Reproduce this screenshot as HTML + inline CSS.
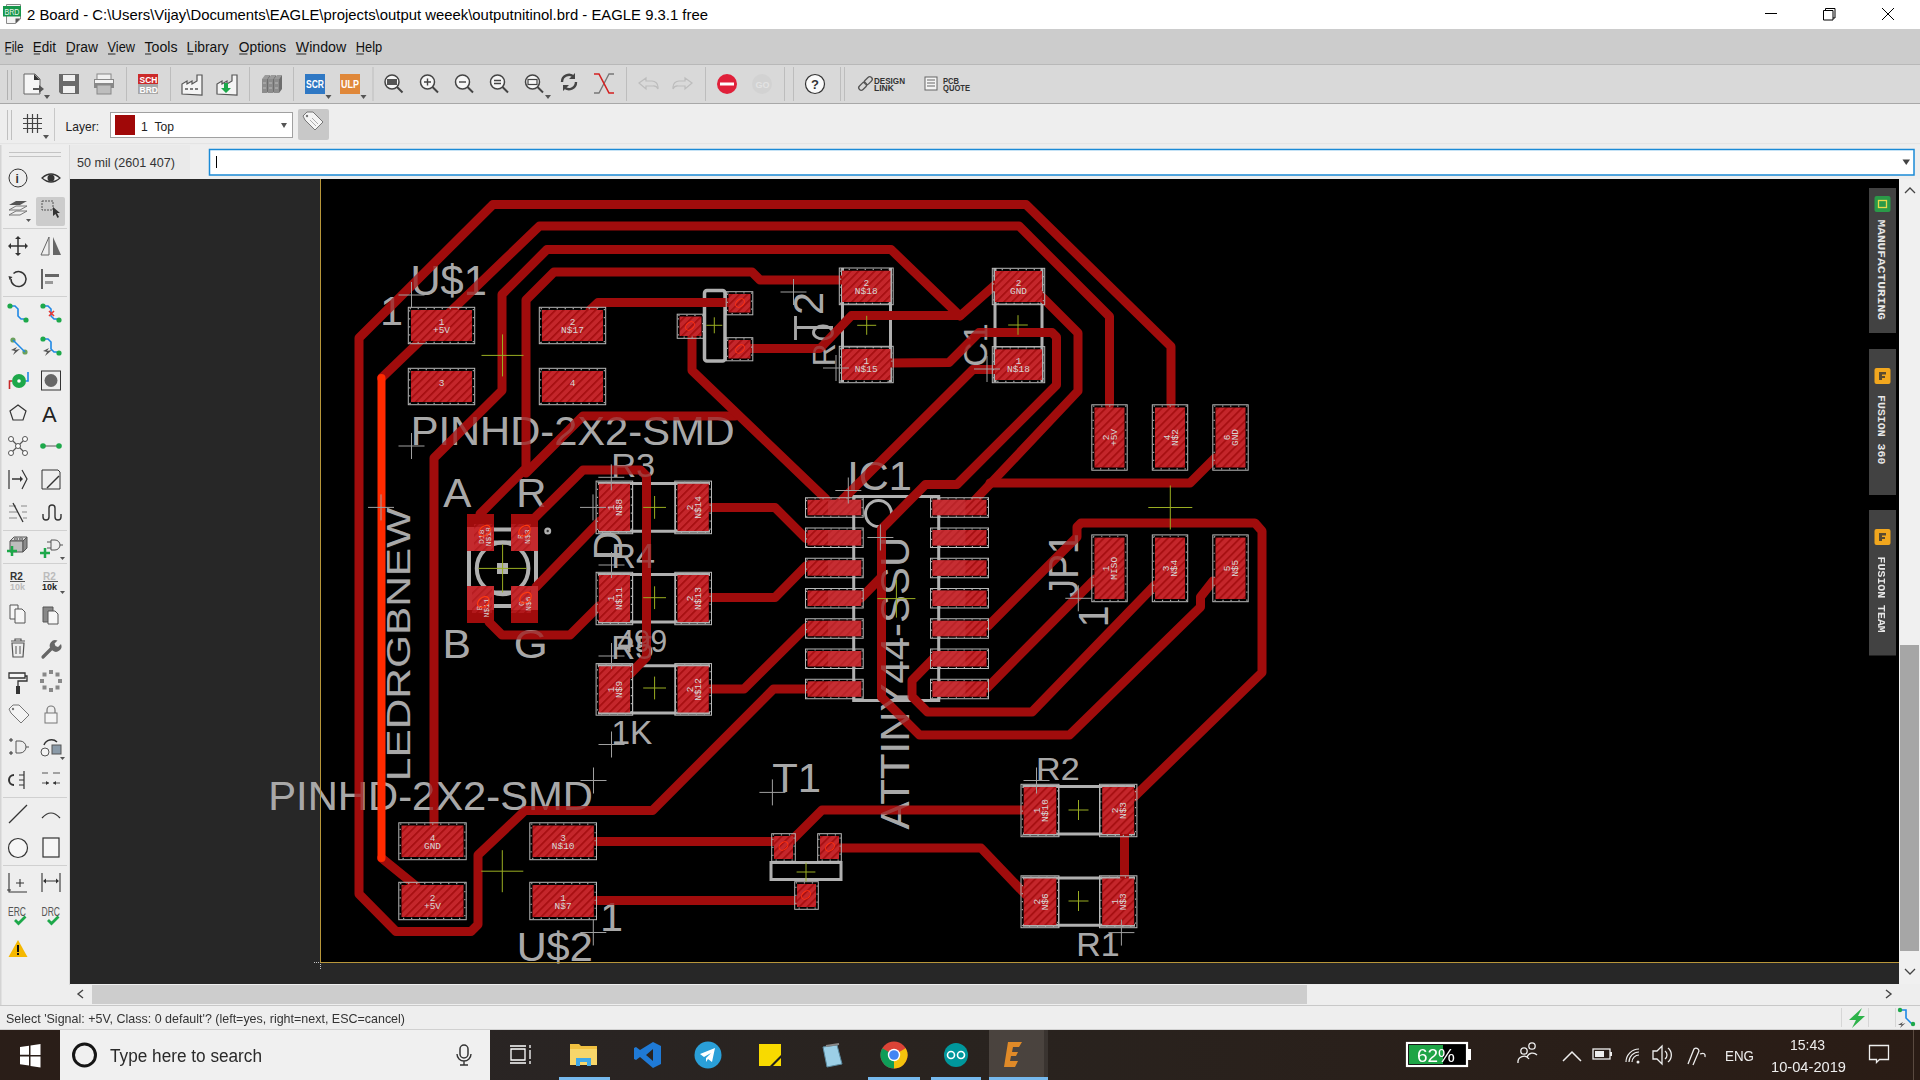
<!DOCTYPE html>
<html><head><meta charset="utf-8"><style>
*{margin:0;padding:0;box-sizing:border-box}
html,body{width:1920px;height:1080px;overflow:hidden;background:#fff}
svg text{font-family:"Liberation Sans", sans-serif}
</style></head><body>
<svg width="1920" height="1080" style="position:absolute;left:0;top:0;display:block"><rect x="0" y="0" width="1920" height="29" fill="#FFFFFF"/><path d="M6.5,4.5h14v14.5l-5,4.5h-9z" fill="#F4F4F4" stroke="#8A8A8A" stroke-width="1"/><path d="M15.5,23.5l5,-5h-5z" fill="#555"/><rect x="3" y="6" width="18" height="10.5" fill="#16964A"/><text x="4.5" y="14.5" font-size="9" fill="#E8F4EC" textLength="15" lengthAdjust="spacingAndGlyphs">BRD</text><text x="27" y="20" font-size="15" fill="#000" textLength="681" lengthAdjust="spacingAndGlyphs">2 Board - C:\Users\Vijay\Documents\EAGLE\projects\output weeek\outputnitinol.brd - EAGLE 9.3.1 free</text><path d="M1765,13.5h12" stroke="#000" stroke-width="1"/><path d="M1823.5,10.5h9.5v9.5h-9.5z M1825.5,10.5v-2h9.5v9.5h-2" stroke="#000" stroke-width="1" fill="none"/><path d="M1882,8l12,12M1894,8l-12,12" stroke="#000" stroke-width="1"/><rect x="0" y="29" width="1920" height="35" fill="#CCCCCC"/><rect x="0" y="64" width="1920" height="1" fill="#B8B8B8"/><text x="4.5" y="52" font-size="14" fill="#111" textLength="19" lengthAdjust="spacingAndGlyphs">File</text><text x="32.75" y="52" font-size="14" fill="#111" textLength="23.25" lengthAdjust="spacingAndGlyphs">Edit</text><text x="65.75" y="52" font-size="14" fill="#111" textLength="32.25" lengthAdjust="spacingAndGlyphs">Draw</text><text x="107.5" y="52" font-size="14" fill="#111" textLength="27.5" lengthAdjust="spacingAndGlyphs">View</text><text x="144.5" y="52" font-size="14" fill="#111" textLength="33" lengthAdjust="spacingAndGlyphs">Tools</text><text x="186.5" y="52" font-size="14" fill="#111" textLength="42.25" lengthAdjust="spacingAndGlyphs">Library</text><text x="238.75" y="52" font-size="14" fill="#111" textLength="47.5" lengthAdjust="spacingAndGlyphs">Options</text><text x="295.75" y="52" font-size="14" fill="#111" textLength="50.5" lengthAdjust="spacingAndGlyphs">Window</text><text x="355.75" y="52" font-size="14" fill="#111" textLength="26.5" lengthAdjust="spacingAndGlyphs">Help</text><rect x="5.5" y="53.5" width="5.75" height="1" fill="#222"/><rect x="33.75" y="53.5" width="6.25" height="1" fill="#222"/><rect x="66.25" y="53.5" width="7.5" height="1" fill="#222"/><rect x="108" y="53.5" width="7.5" height="1" fill="#222"/><rect x="145" y="53.5" width="6.25" height="1" fill="#222"/><rect x="187.5" y="53.5" width="5.5" height="1" fill="#222"/><rect x="239.25" y="53.5" width="8.25" height="1" fill="#222"/><rect x="296.25" y="53.5" width="10.0" height="1" fill="#222"/><rect x="356.25" y="53.5" width="7.5" height="1" fill="#222"/><rect x="0" y="65" width="1920" height="38" fill="#D9D9D9"/><rect x="0" y="103" width="1920" height="1" fill="#A8A8A8"/><path d="M7.5,70V100M11.5,70V100" stroke="#B0B0B0" stroke-width="1"/><path d="M126.5,67V101" stroke="#BDBDBD" stroke-width="1"/><path d="M170.5,67V101" stroke="#BDBDBD" stroke-width="1"/><path d="M249.5,67V101" stroke="#BDBDBD" stroke-width="1"/><path d="M293.5,67V101" stroke="#BDBDBD" stroke-width="1"/><path d="M373,67V101" stroke="#BDBDBD" stroke-width="1"/><path d="M626.5,67V101" stroke="#BDBDBD" stroke-width="1"/><path d="M705.5,67V101" stroke="#BDBDBD" stroke-width="1"/><path d="M784.5,67V101" stroke="#BDBDBD" stroke-width="1"/><path d="M793.5,67V101" stroke="#BDBDBD" stroke-width="1"/><path d="M840.5,67V101" stroke="#BDBDBD" stroke-width="1"/><path d="M844.5,67V101" stroke="#BDBDBD" stroke-width="1"/><path d="M24,74h11l5,5v15H24z" fill="#F6F6F6" stroke="#666" stroke-width="1"/><path d="M34,74l6,6h-6z" fill="#333"/><path d="M33,88h6v-3l5,4l-5,4v-3h-6z" fill="#555"/><path d="M44,95h6l-3,4z" fill="#555"/><path d="M59,74h20v20H61l-2,-2z" fill="#6A6A6A"/><rect x="63" y="75" width="12" height="6" fill="#F0F0F0"/><rect x="63" y="86" width="12" height="7" fill="#F0F0F0"/><rect x="97" y="74" width="14" height="7" fill="#F0F0F0" stroke="#888" stroke-width="1"/><rect x="94" y="79" width="20" height="9" fill="#888"/><rect x="95" y="80" width="18" height="3" fill="#F4F4F4"/><rect x="97" y="85" width="14" height="9" fill="#BDBDBD" stroke="#888" stroke-width="1"/><rect x="138" y="74" width="20" height="10" fill="#CC2A2A"/><rect x="138" y="84" width="20" height="10" fill="#A8A8A8"/><text x="139.5" y="82.5" font-size="8.5" font-weight="bold" fill="#fff">SCH</text><text x="139.5" y="92.5" font-size="8.5" font-weight="bold" fill="#fff">BRD</text><path d="M182,94V84l5,-3v3l5,-3v3l5,-3v-6h5v20z" fill="#F4F4F4" stroke="#555" stroke-width="1.2"/><path d="M185,89h3M190,89h3M195,89h3" stroke="#555" stroke-width="1.5"/><path d="M217,94V84l5,-3v3l5,-3v3l5,-3v-6h5v20z" fill="#F4F4F4" stroke="#555" stroke-width="1.2"/><path d="M224,83h4v5h3l-5,5l-5,-5h3z" fill="#1DA84A"/><path d="M262,79l3,-4h5l-3,4z" fill="#9A9A9A"/><rect x="262" y="79" width="5" height="14" fill="#8C8C8C"/><path d="M267,79l3,-4v14l-3,4z" fill="#6E6E6E"/><path d="M263,83h3M263,88h3" stroke="#C8C8C8" stroke-width="0.8"/><path d="M268,79l3,-4h5l-3,4z" fill="#9A9A9A"/><rect x="268" y="79" width="5" height="14" fill="#8C8C8C"/><path d="M273,79l3,-4v14l-3,4z" fill="#6E6E6E"/><path d="M269,83h3M269,88h3" stroke="#C8C8C8" stroke-width="0.8"/><path d="M274,79l3,-4h5l-3,4z" fill="#9A9A9A"/><rect x="274" y="79" width="5" height="14" fill="#8C8C8C"/><path d="M279,79l3,-4v14l-3,4z" fill="#6E6E6E"/><path d="M275,83h3M275,88h3" stroke="#C8C8C8" stroke-width="0.8"/><rect x="305" y="74" width="20" height="20" fill="#2F78C4"/><text x="306" y="88" font-size="10" font-weight="bold" fill="#fff" textLength="18" lengthAdjust="spacingAndGlyphs">SCR</text><path d="M325.5,95h6l-3,4z" fill="#555"/><rect x="340" y="74" width="20" height="20" fill="#E0883A"/><text x="341" y="88" font-size="10" font-weight="bold" fill="#fff" textLength="18" lengthAdjust="spacingAndGlyphs">ULP</text><path d="M360.5,95h6l-3,4z" fill="#555"/><circle cx="392" cy="82" r="7" fill="#F6F6F6" stroke="#444" stroke-width="1.5"/><path d="M397,87l5.5,5.5" stroke="#444" stroke-width="2"/><rect x="387" y="79" width="10" height="6" fill="#555"/><circle cx="427.5" cy="82" r="7" fill="#F6F6F6" stroke="#444" stroke-width="1.5"/><path d="M432.5,87l5.5,5.5" stroke="#444" stroke-width="2"/><path d="M424.0,82h7M427.5,78.5v7" stroke="#444" stroke-width="1.4"/><circle cx="462.5" cy="82" r="7" fill="#F6F6F6" stroke="#444" stroke-width="1.5"/><path d="M467.5,87l5.5,5.5" stroke="#444" stroke-width="2"/><path d="M459.0,82h7" stroke="#444" stroke-width="1.4"/><circle cx="497.5" cy="82" r="7" fill="#F6F6F6" stroke="#444" stroke-width="1.5"/><path d="M502.5,87l5.5,5.5" stroke="#444" stroke-width="2"/><path d="M494.0,80.5h7M494.0,83.5h7" stroke="#444" stroke-width="1.4"/><circle cx="532.5" cy="82" r="7" fill="#F6F6F6" stroke="#444" stroke-width="1.5"/><path d="M537.5,87l5.5,5.5" stroke="#444" stroke-width="2"/><rect x="528.0" y="79.5" width="9" height="5" fill="none" stroke="#444" stroke-width="1.2"/><path d="M545,95h6l-3,4z" fill="#555"/><path d="M562,82a7,7 0 0 1 12,-5M576,82a7,7 0 0 1 -12,5" stroke="#444" stroke-width="2.4" fill="none"/><path d="M575,73v6h-6z M563,91v-6h6z" fill="#444"/><path d="M594,93h5l10,-19h5" stroke="#777" stroke-width="1.3" fill="none"/><path d="M594,74h5l10,19h5" stroke="#D42020" stroke-width="1.6" fill="none"/><path d="M639,83l7,-5v3h6a6,6 0 0 1 6,6v2a5,5 0 0 0 -5,-3h-7v3z" fill="none" stroke="#BDBDBD" stroke-width="1.2"/><path d="M692,83l-7,-5v3h-6a6,6 0 0 0 -6,6v2a5,5 0 0 1 5,-3h7v3z" fill="none" stroke="#BDBDBD" stroke-width="1.2"/><circle cx="727" cy="84" r="10" fill="#E0203A"/><rect x="720" y="82.5" width="14" height="3" fill="#fff"/><circle cx="762" cy="84" r="10" fill="#D2D2D2"/><text x="755.5" y="88" font-size="9" font-weight="bold" fill="#E2E2E2">GO</text><circle cx="815" cy="84" r="9.5" fill="#FAFAFA" stroke="#333" stroke-width="1.2"/><text x="811" y="89" font-size="13" font-weight="bold" fill="#333">?</text><g transform="rotate(-45 865.5 83.5)"><rect x="857" y="81" width="9" height="5" rx="2.5" fill="none" stroke="#555" stroke-width="1.3"/><rect x="865" y="81" width="9" height="5" rx="2.5" fill="none" stroke="#555" stroke-width="1.3"/></g><text x="874" y="83.5" font-size="8.5" font-weight="bold" fill="#333" textLength="31" lengthAdjust="spacingAndGlyphs">DESIGN</text><text x="874" y="91" font-size="8.5" font-weight="bold" fill="#333" textLength="20" lengthAdjust="spacingAndGlyphs">LINK</text><rect x="925" y="77" width="12" height="13" fill="#F4F4F4" stroke="#666" stroke-width="1"/><path d="M927,80h8M927,83h8M927,86h8" stroke="#666" stroke-width="1"/><text x="943" y="83.5" font-size="8.5" font-weight="bold" fill="#333" textLength="16" lengthAdjust="spacingAndGlyphs">PCB</text><text x="943" y="91" font-size="8.5" font-weight="bold" fill="#333" textLength="27" lengthAdjust="spacingAndGlyphs">QUOTE</text><rect x="0" y="104" width="1920" height="40" fill="#EEEEEE"/><rect x="0" y="143.5" width="1920" height="1" fill="#DADADA"/><path d="M7.5,110V140M11.5,110V140" stroke="#C0C0C0" stroke-width="1"/><path d="M54.5,108V141" stroke="#C8C8C8" stroke-width="1"/><path d="M23,118.5h19M23,123.5h19M23,128.5h19M27.5,114v19M32.5,114v19M37.5,114v19" stroke="#444" stroke-width="1.2"/><path d="M43,135h6l-3,4z" fill="#555"/><text x="65.5" y="130.5" font-size="13.5" fill="#222" textLength="33.5" lengthAdjust="spacingAndGlyphs">Layer:</text><rect x="110.5" y="112.5" width="182" height="25" fill="#FFF" stroke="#A0A0A0" stroke-width="1"/><rect x="115" y="115" width="20" height="20" fill="#A00808"/><text x="141" y="130.5" font-size="13.5" fill="#222" textLength="33" lengthAdjust="spacingAndGlyphs">1&#160;&#160;Top</text><path d="M281,123h6l-3,5z" fill="#555"/><rect x="298" y="109" width="31" height="31" rx="2" fill="#C8C8C8"/><path d="M303,116l4,-4h6l10,10l-8,8l-10,-10z" fill="#F4F4F4" stroke="#777" stroke-width="1"/><circle cx="307" cy="116" r="1.2" fill="#777"/><path d="M310,120l6,6M312,118l6,6" stroke="#999" stroke-width="0.8"/><rect x="0" y="144.5" width="1920" height="34.5" fill="#EEEEEE"/><rect x="70" y="145" width="120" height="34" fill="#EAEAEA"/><text x="77" y="167" font-size="13" fill="#333" textLength="98" lengthAdjust="spacingAndGlyphs">50 mil (2601 407)</text><rect x="209.5" y="149.5" width="1704.5" height="25.5" fill="#FFF" stroke="#1A8AD6" stroke-width="1.5"/><rect x="216" y="156" width="1" height="12" fill="#000"/><path d="M1902.5,159.5h7.5l-3.75,5.5z" fill="#444"/><rect x="0" y="145" width="70" height="860" fill="#EEEEEE"/><rect x="0" y="145" width="1.5" height="860" fill="#D4D4D4"/><rect x="69" y="145" width="1" height="840" fill="#D8D8D8"/><path d="M9,152.5H61M9,156.5H61" stroke="#C4C4C4" stroke-width="1"/><path d="M3,228.5H67" stroke="#D0D0D0" stroke-width="1"/><path d="M3,296.5H67" stroke="#D0D0D0" stroke-width="1"/><path d="M3,530.5H67" stroke="#D0D0D0" stroke-width="1"/><path d="M3,563.5H67" stroke="#D0D0D0" stroke-width="1"/><path d="M3,797.5H67" stroke="#D0D0D0" stroke-width="1"/><path d="M3,865.5H67" stroke="#D0D0D0" stroke-width="1"/><circle cx="18" cy="178" r="9" fill="none" stroke="#333" stroke-width="1"/><text x="15.5" y="183" font-size="12" font-weight="bold" fill="#333" font-family="Liberation Serif">i</text><path d="M42,178q9,-8 18,0q-9,8 -18,0z" fill="none" stroke="#333" stroke-width="1.2"/><circle cx="51" cy="178" r="3.5" fill="#333"/><path d="M9,205l7,-4h11l-7,4z" fill="#555"/><path d="M9,210l7,-4h11l-7,4zM9,215l7,-4h11l-7,4z" fill="none" stroke="#777" stroke-width="1"/><path d="M26,219h5l-2.5,3z" fill="#555"/><rect x="36" y="197" width="29" height="29" rx="2" fill="#CCCCCC"/><rect x="42" y="201" width="11" height="9" fill="none" stroke="#555" stroke-width="1" stroke-dasharray="2,1"/><path d="M53,207l0,9l2.5,-2l2,4l1.5,-1l-2,-4h3z" fill="#333"/><path d="M9,246h18M18,237v18" stroke="#333" stroke-width="1.5"/><path d="M8,246l3,-3v6zM28,246l-3,-3v6zM18,236l-3,3h6zM18,256l-3,-3h6z" fill="#333"/><path d="M49,237v18h-8z" fill="none" stroke="#666" stroke-width="1"/><path d="M53,237v18h8z" fill="#666"/><path d="M11,279a7.5,7.5 0 1 0 2.5,-5.5" stroke="#333" stroke-width="1.5" fill="none"/><path d="M9.5,280l3,-3l-4,-1z" fill="#333"/><path d="M42,269v20" stroke="#333" stroke-width="1.5"/><rect x="45" y="274" width="14" height="3" fill="#666"/><rect x="45" y="281" width="8" height="3" fill="#999"/><path d="M10,306h5l3,3v7l3,3h3" stroke="#1E88E5" stroke-width="1.6" fill="none"/><circle cx="10" cy="306" r="2.6" fill="#1DA84A"/><circle cx="26" cy="320" r="2.6" fill="#1DA84A"/><path d="M43,306h5l3,3v7l3,3h3" stroke="#1E88E5" stroke-width="1.6" fill="none"/><circle cx="43" cy="306" r="2.6" fill="#1DA84A"/><circle cx="59" cy="320" r="2.6" fill="#1DA84A"/><path d="M49,311l5,5M54,311l-5,5" stroke="#E53935" stroke-width="1.6"/><circle cx="13" cy="340" r="2.6" fill="#6BA05A"/><circle cx="25" cy="352" r="2.6" fill="#6BA05A"/><path d="M13,340l12,12" stroke="#1E88E5" stroke-width="1.5"/><path d="M11,350l6,-3l-2,3l5,-1l-7,6l2,-4z" fill="#555"/><path d="M43,339h5l3,3v7l3,3h3" stroke="#1E88E5" stroke-width="1.6" fill="none"/><circle cx="43" cy="339" r="2.6" fill="#1DA84A"/><circle cx="59" cy="353" r="2.6" fill="#1DA84A"/><path d="M43,351l6,-3l-2,3l5,-1l-7,6l2,-4z" fill="#555"/><circle cx="19" cy="381" r="7" fill="#1DA84A"/><circle cx="19" cy="381" r="1.8" fill="#fff"/><path d="M26,381h2v-9" stroke="#1E88E5" stroke-width="1.6" fill="none"/><path d="M12,381h-2.5v8" stroke="#C62828" stroke-width="1.6" fill="none"/><rect x="41.5" y="371" width="19" height="19" fill="none" stroke="#333" stroke-width="1"/><circle cx="51" cy="380.5" r="6.5" fill="#666"/><path d="M18,405l8,6l-3,9h-10l-3,-9z" fill="none" stroke="#333" stroke-width="1.2"/><text x="42" y="422" font-size="22" fill="#222">A</text><path d="M11,439l14,14M25,439l-14,14" stroke="#555" stroke-width="1.2"/><circle cx="11" cy="439" r="2.5" fill="#fff" stroke="#555" stroke-width="1"/><circle cx="25" cy="439" r="2.5" fill="#fff" stroke="#555" stroke-width="1"/><circle cx="11" cy="453" r="2.5" fill="#fff" stroke="#555" stroke-width="1"/><circle cx="25" cy="453" r="2.5" fill="#fff" stroke="#555" stroke-width="1"/><circle cx="18" cy="446" r="2.5" fill="#fff" stroke="#555" stroke-width="1"/><path d="M43,446h16" stroke="#888" stroke-width="1.5"/><circle cx="43" cy="446" r="2.8" fill="#1DA84A"/><circle cx="59" cy="446" r="2.8" fill="#1DA84A"/><path d="M9,470v19" stroke="#333" stroke-width="1.2"/><path d="M12,479h8" stroke="#333" stroke-width="1.5"/><path d="M20,476l3,3l-3,3z" fill="#333"/><path d="M22,470l5,9l-5,10" stroke="#333" stroke-width="1.2" fill="none"/><path d="M42,470h16l2,2v17h-18z" fill="none" stroke="#333" stroke-width="1"/><path d="M47,488l12,-12" stroke="#333" stroke-width="1.5"/><path d="M9,506h7M9,512h9M9,518h8M21,506h6M22,512h5M23,518h4" stroke="#888" stroke-width="1.2"/><path d="M13,503l10,19" stroke="#333" stroke-width="1.3"/><path d="M43,514v3a3,3 0 0 0 6,0v-9a3,3 0 0 1 6,0v9a3,3 0 0 0 6,0v-3" stroke="#333" stroke-width="1.4" fill="none"/><path d="M10,541l4,-4h13l-4,4z" fill="#D8D8D8" stroke="#555" stroke-width="1"/><path d="M10,541h13v11h-13z" fill="#BDBDBD" stroke="#555" stroke-width="1"/><path d="M23,541l4,-4v11l-4,4z" fill="#8A8A8A" stroke="#555" stroke-width="1"/><ellipse cx="16" cy="539" rx="1.8" ry="1" fill="none" stroke="#555" stroke-width="0.8"/><ellipse cx="21" cy="539" rx="1.8" ry="1" fill="none" stroke="#555" stroke-width="0.8"/><path d="M7,551h10M12,546v10" stroke="#1DA84A" stroke-width="2.5"/><path d="M51,540h4a5,5 0 0 1 0,10h-4z" fill="none" stroke="#555" stroke-width="1"/><path d="M47,542h4M47,548h4M60,545h3" stroke="#555" stroke-width="1"/><path d="M40,553h10M45,548v10" stroke="#1DA84A" stroke-width="2.5"/><path d="M60,557h5l-2.5,3z" fill="#555"/><text x="10" y="580" font-size="10" font-weight="bold" fill="#333">R2</text><rect x="10" y="581" width="15" height="1" fill="#555"/><text x="10" y="590" font-size="9" font-weight="bold" fill="#BBB">10k</text><text x="43" y="580" font-size="10" font-weight="bold" fill="#BBB">R2</text><rect x="43" y="581" width="15" height="1" fill="#555"/><text x="42" y="590" font-size="9" font-weight="bold" fill="#222">10k</text><path d="M60,591h5l-2.5,3z" fill="#555"/><path d="M10,605h8l0,0v14h-8z" fill="#F6F6F6" stroke="#555" stroke-width="1"/><path d="M15,609h7l3,3v11h-10z" fill="#F6F6F6" stroke="#555" stroke-width="1"/><path d="M43,607h10v15h-10z" fill="#888" stroke="#555" stroke-width="1"/><path d="M48,611h7l3,3v10h-10z" fill="#F6F6F6" stroke="#555" stroke-width="1"/><path d="M11,641h14M15,641v-2h6v2M12,643h12l-1,14h-10z" fill="none" stroke="#555" stroke-width="1.2"/><path d="M16,646v8M20,646v8" stroke="#555" stroke-width="1"/><path d="M43,657l9,-9" stroke="#666" stroke-width="3.2" stroke-linecap="round"/><path d="M51,649a5.5,5.5 0 0 1 6.5,-8.5l-3,3l1,2.5l2.5,1l3,-3a5.5,5.5 0 0 1 -8.5,6.5z" fill="#666"/><path d="M9,673h16v5h-16z" fill="#F6F6F6" stroke="#333" stroke-width="1.3"/><path d="M25,676h2v5h-9v5" stroke="#333" stroke-width="1.3" fill="none"/><rect x="16" y="686" width="4" height="8" fill="#333"/><rect x="49" y="670" width="4" height="4" fill="#888"/><rect x="55.5" y="672.5" width="4" height="4" fill="#888"/><rect x="58" y="679" width="4" height="4" fill="#888"/><rect x="55.5" y="685.5" width="4" height="4" fill="#888"/><rect x="49" y="688" width="4" height="4" fill="#888"/><rect x="42.5" y="685.5" width="4" height="4" fill="#888"/><rect x="40" y="679" width="4" height="4" fill="#888"/><rect x="42.5" y="672.5" width="4" height="4" fill="#888"/><path d="M9,709l4,-4h6l10,10l-8,8l-10,-10z" fill="#F4F4F4" stroke="#777" stroke-width="1"/><circle cx="13" cy="709" r="1.2" fill="#777"/><rect x="45" y="713" width="12" height="10" fill="#F4F4F4" stroke="#777" stroke-width="1"/><path d="M47,713v-3a4,4 0 0 1 8,0v3" stroke="#777" stroke-width="1.2" fill="none"/><path d="M9,740h4M11,738v4M9,753h4M11,751v4" stroke="#333" stroke-width="1"/><path d="M16,741h4a6,6 0 0 1 0,12h-4z" fill="none" stroke="#555" stroke-width="1"/><path d="M26,747h3" stroke="#555" stroke-width="1"/><circle cx="45" cy="752" r="4" fill="#F4F4F4" stroke="#555" stroke-width="1"/><rect x="52" y="745" width="9" height="9" fill="#8A9AA8" stroke="#555" stroke-width="1"/><path d="M44,745a8,8 0 0 1 13,-3" stroke="#333" stroke-width="1.5" fill="none"/><path d="M60,757h5l-2.5,3z" fill="#555"/><path d="M14,775a5,5 0 0 0 0,10" stroke="#333" stroke-width="2" fill="none"/><path d="M24,771v18M19,775h5M19,780h5M19,785h5" stroke="#333" stroke-width="1.2"/><path d="M42,773h6M53,773h7M42,783h7M53,783h7" stroke="#555" stroke-width="1.2"/><path d="M49,783l-3,-2v4zM53,783l3,-2v4z" fill="#333"/><path d="M9,823l18,-18" stroke="#333" stroke-width="1.2"/><path d="M42,818q9,-10 18,0" stroke="#333" stroke-width="1.2" fill="none"/><circle cx="18" cy="848" r="9.5" fill="#F6F6F6" stroke="#333" stroke-width="1.2"/><rect x="43" y="838" width="16" height="19" fill="#F6F6F6" stroke="#333" stroke-width="1.2"/><path d="M9,873v19h18M16,883h8M20,879v8M7,890h4M9,888v4" stroke="#333" stroke-width="1.1" fill="none"/><path d="M42,873v19M60,873v19M44,881h14" stroke="#333" stroke-width="1.1"/><path d="M43,881l3,-2.5v5zM59,881l-3,-2.5v5z" fill="#333"/><text x="8" y="916" font-size="13" fill="#555" textLength="18" lengthAdjust="spacingAndGlyphs">ERC</text><path d="M15,920l3.5,3.5l7,-7" stroke="#1DA84A" stroke-width="2.8" fill="none"/><text x="41.5" y="916" font-size="13" fill="#555" textLength="18.5" lengthAdjust="spacingAndGlyphs">DRC</text><path d="M48,920l3.5,3.5l7,-7" stroke="#1DA84A" stroke-width="2.8" fill="none"/><path d="M18,940l9.5,17h-19z" fill="#F5B800"/><rect x="17" y="945" width="2" height="7" fill="#111"/><rect x="17" y="953" width="2" height="2" fill="#111"/><defs><pattern id="hatch" width="5.66" height="5.66" patternUnits="userSpaceOnUse" patternTransform="rotate(45)"><rect width="5.66" height="5.66" fill="#C4262B"/><rect width="1.6" height="5.66" fill="#A40C0E"/></pattern><clipPath id="cv"><rect x="70" y="179" width="1830" height="806"/></clipPath></defs><g clip-path="url(#cv)"><rect x="70" y="179" width="1830" height="806" fill="#272727"/><rect x="320.5" y="179" width="1580" height="783.5" fill="#000"/><path d="M320.5,179 V962.5 H1900" stroke="#B8963A" stroke-width="1" fill="none"/><path d="M314,962.5H327M320.5,956V969" stroke="#C8C8C8" stroke-width="1" stroke-dasharray="1,1"/><path d="M598,483.5H710M598,531.2H710" stroke="#B0B0B0" stroke-width="3"/><path d="M632.5,482V532.7M675.5,482V532.7" stroke="#B0B0B0" stroke-width="1"/><path d="M598,574.5H710M598,622.0H710" stroke="#B0B0B0" stroke-width="3"/><path d="M632.5,573V623.5M675.5,573V623.5" stroke="#B0B0B0" stroke-width="1"/><path d="M598,665.7H710M598,713.1H710" stroke="#B0B0B0" stroke-width="3"/><path d="M632.5,664.2V714.6M675.5,664.2V714.6" stroke="#B0B0B0" stroke-width="1"/><path d="M1023,786.5H1135M1023,834.1H1135" stroke="#B0B0B0" stroke-width="3"/><path d="M1058.5,785V835.6M1100,785V835.6" stroke="#B0B0B0" stroke-width="1"/><path d="M1023,877.9H1135M1023,925.3H1135" stroke="#B0B0B0" stroke-width="3"/><path d="M1058.5,876.4V926.8M1100,876.4V926.8" stroke="#B0B0B0" stroke-width="1"/><path d="M842.5,268V382M890.5,268V382" stroke="#B0B0B0" stroke-width="3"/><path d="M842.5,304H890.5M842.5,347H890.5" stroke="#B0B0B0" stroke-width="1"/><path d="M995,268V382M1042,268V382" stroke="#B0B0B0" stroke-width="3"/><path d="M995,304H1042M995,347H1042" stroke="#B0B0B0" stroke-width="1"/><path d="M853.7,496.6V700.4H938.7V496.6Z" stroke="#B0B0B0" stroke-width="3" fill="none"/><circle cx="878.5" cy="513.5" r="13" stroke="#B0B0B0" stroke-width="3" fill="none"/><rect x="704.5" y="290.5" width="20.5" height="70.5" rx="2.5" stroke="#B0B0B0" stroke-width="3.5" fill="none"/><rect x="771" y="862.5" width="70" height="17" stroke="#B0B0B0" stroke-width="3" fill="none"/><path d="M469,549V589M536,549V589" stroke="#B0B0B0" stroke-width="4"/><path d="M494,529.5H511M494,542.5H511M494,592.5H511M494,606H511" stroke="#B0B0B0" stroke-width="4"/><circle cx="502.6" cy="568.4" r="25.8" stroke="#B0B0B0" stroke-width="4" fill="none"/><rect x="497" y="563" width="11" height="11" fill="#B0B0B0"/><circle cx="547.7" cy="531" r="3.5" fill="#B0B0B0"/><circle cx="547.7" cy="531" r="1.2" fill="#333"/><g fill="#A9A9A9"><text font-size="42.01" transform="translate(410.57,295.40) scale(0.9898,1)">U$1</text><text font-size="40.86" transform="translate(380.14,325.00) scale(1.0012,1)">1</text><text font-size="40.29" transform="translate(410.67,445.30) scale(1.0344,1)">PINHD-2X2-SMD</text><text font-size="41.43" transform="translate(443.20,506.90) scale(1.0166,1)">A</text><text font-size="41.43" transform="translate(516.35,506.90) scale(1.0104,1)">R</text><text font-size="41.29" transform="translate(442.49,657.90) scale(1.0315,1)">B</text><text font-size="41.29" transform="translate(513.82,657.90) scale(1.0582,1)">G</text><text font-size="32.69" transform="translate(611.15,476.90) scale(1.0523,1)">R3</text><text font-size="34.55" transform="translate(611.26,567.60) scale(0.9895,1)">R4</text><text font-size="32.11" transform="translate(617.40,652.40) scale(0.9303,1)">499</text><text font-size="32.54" transform="translate(611.35,658.90) scale(1.0172,1)">R5</text><text font-size="33.12" transform="translate(611.57,744.00) scale(1.0065,1)">1K</text><text font-size="41.43" transform="translate(847.16,489.80) scale(1.0028,1)">IC1</text><text font-size="41.43" transform="translate(772.16,791.90) scale(1.0093,1)">T1</text><text font-size="32.26" transform="translate(1036.02,779.70) scale(1.0580,1)">R2</text><text font-size="32.69" transform="translate(1076.28,955.80) scale(1.0401,1)">R1</text><text font-size="40.86" transform="translate(268.26,809.75) scale(1.0218,1)">PINHD-2X2-SMD</text><text font-size="40.86" transform="translate(516.68,961.30) scale(1.0147,1)">U$2</text><text font-size="41.29" transform="translate(600.14,930.80) scale(0.9908,1)">1</text><text font-size="33.84" transform="translate(410.30,781.19) rotate(-90) scale(1.2538,1)">LEDRGBNEW</text><text font-size="41.29" transform="translate(908.90,829.60) rotate(-90) scale(1.0157,1)">ATTINY44-SSU</text><text font-size="42.15" transform="translate(1078.30,597.44) rotate(-90) scale(0.8818,1)">JP1</text><text font-size="41.72" transform="translate(1108.00,627.14) rotate(-90) scale(0.9370,1)">1</text><text font-size="33.69" transform="translate(987.40,366.69) rotate(-90) scale(1.0061,1)">C1</text><text font-size="40.43" transform="translate(622.40,560.28) rotate(-90) scale(1.0141,1)">D</text><text font-size="43.01" transform="translate(823.30,314.98) rotate(-90) scale(0.9679,1)">2</text><text font-size="32.26" transform="translate(835.00,366.29) rotate(-90) scale(0.9852,1)">R</text><path d="M795.5,316V340M797,327.5H833" stroke="#A9A9A9" stroke-width="2.8"/><ellipse cx="823" cy="332.5" rx="9.5" ry="6.5" fill="none" stroke="#A9A9A9" stroke-width="2.8"/></g><g stroke="#A00C0C" stroke-width="9" fill="none" stroke-linecap="round" stroke-linejoin="round"><path d="M1171,405 L1171,346.5 L1026,204.5 L493,204.5 L359,338 L359,894 L396,931.5 L471,931.5 L478,924.5 L478,855 L525,810.5 L652.5,810.5 L773.5,689 L806,689"/><path d="M381.5,858 L416,886"/><path d="M381.5,378 L539.5,226 L1019,226 L1109.5,316.5 L1109.5,405"/><path d="M434,824 L434,458 L502,390.5 L502,294.5 L547,249.5 L891,249.5 L960,316 L995,285"/><path d="M740,348.5 L820,348.5 L851.5,315.5 L960,315.5"/><path d="M842,280 L760,280 L752,272 L554,272 L526,300 L526,468 L480,514"/><path d="M735,416 L583,416 L526,473"/><path d="M590,310 L598,302.5 L740,302.5"/><path d="M692,327 L692,370.5 L826,499"/><path d="M890,363 L949,362.5 L979,332.5 L1052,332.5 L1056.5,337 L1056.5,385 L957,484.5 L925.5,484.5 L881.5,529 L881.5,697 L919.5,735 L1069.5,735 L1200.5,607 L1200.5,597 L1213,581"/><path d="M881.5,577 L861,598"/><path d="M1000,369.5 L973,369.5 L838,504"/><path d="M1040,295 L1078,333 L1078,391 L975,500"/><path d="M990,483 L1190,483 L1215,458"/><path d="M1134,797 L1262,672.5 L1262,531 L1255,523 L1081,523 L1077,527 L1077,537 L988,626"/><path d="M1095,579 L987,688"/><path d="M1155,585 L1032,712 L927.5,712 L912,696.5 L912,680.5 L935,657"/><path d="M532,520.5 L583,470 L640.5,470 L646.5,476 L646.5,657 L630,674"/><path d="M536,587 L600,521"/><path d="M489,622 L502,635 L570,635 L599,606"/><path d="M709,507.5 L775,507.5 L806,538.5"/><path d="M709,597.5 L775,597.5 L806,566"/><path d="M709,689 L744,689 L806,627.5"/><path d="M596,841.5 L784,841.5"/><path d="M790,842 L822,810 L1024,810"/><path d="M840,848 L981,848 L1026,895"/><path d="M596,900.5 L806,900.5"/><path d="M1124.5,834 L1124.5,877"/></g><rect x="411" y="310" width="61.00" height="31.00" fill="url(#hatch)"/><rect x="408.30" y="307.30" width="66.40" height="36.40" fill="none" stroke="#B8B8B8" stroke-width="1"/><rect x="409.65" y="308.65" width="63.70" height="33.70" fill="none" stroke="#A8A8A8" stroke-width="1.2" stroke-dasharray="1.2,6.8"/><text x="441.50" y="325.00" font-size="9.5" fill="#D6D6D6" text-anchor="middle" style="font-family:Liberation Mono">1</text><text x="441.50" y="333.00" font-size="9.5" fill="#D6D6D6" text-anchor="middle" style="font-family:Liberation Mono">+5V</text><rect x="411" y="371" width="61.00" height="31.00" fill="url(#hatch)"/><rect x="408.30" y="368.30" width="66.40" height="36.40" fill="none" stroke="#B8B8B8" stroke-width="1"/><rect x="409.65" y="369.65" width="63.70" height="33.70" fill="none" stroke="#A8A8A8" stroke-width="1.2" stroke-dasharray="1.2,6.8"/><text x="441.50" y="386.00" font-size="9.5" fill="#D6D6D6" text-anchor="middle" style="font-family:Liberation Mono">3</text><text x="441.50" y="394.00" font-size="9.5" fill="#D6D6D6" text-anchor="middle" style="font-family:Liberation Mono"></text><rect x="542" y="310" width="61.00" height="31.00" fill="url(#hatch)"/><rect x="539.30" y="307.30" width="66.40" height="36.40" fill="none" stroke="#B8B8B8" stroke-width="1"/><rect x="540.65" y="308.65" width="63.70" height="33.70" fill="none" stroke="#A8A8A8" stroke-width="1.2" stroke-dasharray="1.2,6.8"/><text x="572.50" y="325.00" font-size="9.5" fill="#D6D6D6" text-anchor="middle" style="font-family:Liberation Mono">2</text><text x="572.50" y="333.00" font-size="9.5" fill="#D6D6D6" text-anchor="middle" style="font-family:Liberation Mono">N$17</text><rect x="542" y="371" width="61.00" height="31.00" fill="url(#hatch)"/><rect x="539.30" y="368.30" width="66.40" height="36.40" fill="none" stroke="#B8B8B8" stroke-width="1"/><rect x="540.65" y="369.65" width="63.70" height="33.70" fill="none" stroke="#A8A8A8" stroke-width="1.2" stroke-dasharray="1.2,6.8"/><text x="572.50" y="386.00" font-size="9.5" fill="#D6D6D6" text-anchor="middle" style="font-family:Liberation Mono">4</text><text x="572.50" y="394.00" font-size="9.5" fill="#D6D6D6" text-anchor="middle" style="font-family:Liberation Mono"></text><rect x="401.5" y="825.5" width="62.00" height="31.50" fill="url(#hatch)"/><rect x="398.80" y="822.80" width="67.40" height="36.90" fill="none" stroke="#B8B8B8" stroke-width="1"/><rect x="400.15" y="824.15" width="64.70" height="34.20" fill="none" stroke="#A8A8A8" stroke-width="1.2" stroke-dasharray="1.2,6.8"/><text x="432.50" y="840.75" font-size="9.5" fill="#D6D6D6" text-anchor="middle" style="font-family:Liberation Mono">4</text><text x="432.50" y="848.75" font-size="9.5" fill="#D6D6D6" text-anchor="middle" style="font-family:Liberation Mono">GND</text><rect x="401.5" y="885" width="62.00" height="32.00" fill="url(#hatch)"/><rect x="398.80" y="882.30" width="67.40" height="37.40" fill="none" stroke="#B8B8B8" stroke-width="1"/><rect x="400.15" y="883.65" width="64.70" height="34.70" fill="none" stroke="#A8A8A8" stroke-width="1.2" stroke-dasharray="1.2,6.8"/><text x="432.50" y="900.50" font-size="9.5" fill="#D6D6D6" text-anchor="middle" style="font-family:Liberation Mono">2</text><text x="432.50" y="908.50" font-size="9.5" fill="#D6D6D6" text-anchor="middle" style="font-family:Liberation Mono">+5V</text><rect x="532.5" y="825.5" width="61.30" height="31.50" fill="url(#hatch)"/><rect x="529.80" y="822.80" width="66.70" height="36.90" fill="none" stroke="#B8B8B8" stroke-width="1"/><rect x="531.15" y="824.15" width="64.00" height="34.20" fill="none" stroke="#A8A8A8" stroke-width="1.2" stroke-dasharray="1.2,6.8"/><text x="563.15" y="840.75" font-size="9.5" fill="#D6D6D6" text-anchor="middle" style="font-family:Liberation Mono">3</text><text x="563.15" y="848.75" font-size="9.5" fill="#D6D6D6" text-anchor="middle" style="font-family:Liberation Mono">N$10</text><rect x="532.5" y="885" width="61.30" height="32.00" fill="url(#hatch)"/><rect x="529.80" y="882.30" width="66.70" height="37.40" fill="none" stroke="#B8B8B8" stroke-width="1"/><rect x="531.15" y="883.65" width="64.00" height="34.70" fill="none" stroke="#A8A8A8" stroke-width="1.2" stroke-dasharray="1.2,6.8"/><text x="563.15" y="900.50" font-size="9.5" fill="#D6D6D6" text-anchor="middle" style="font-family:Liberation Mono">1</text><text x="563.15" y="908.50" font-size="9.5" fill="#D6D6D6" text-anchor="middle" style="font-family:Liberation Mono">N$7</text><rect x="728.5" y="294" width="22.00" height="18.50" fill="url(#hatch)"/><rect x="726.20" y="291.70" width="26.60" height="23.10" fill="none" stroke="#B8B8B8" stroke-width="1"/><rect x="727.35" y="292.85" width="24.30" height="20.80" fill="none" stroke="#A8A8A8" stroke-width="1.2" stroke-dasharray="1.2,6.8"/><rect x="679.5" y="316.5" width="22.00" height="19.50" fill="url(#hatch)"/><rect x="677.20" y="314.20" width="26.60" height="24.10" fill="none" stroke="#B8B8B8" stroke-width="1"/><rect x="678.35" y="315.35" width="24.30" height="21.80" fill="none" stroke="#A8A8A8" stroke-width="1.2" stroke-dasharray="1.2,6.8"/><rect x="728.5" y="340" width="22.00" height="18.50" fill="url(#hatch)"/><rect x="726.20" y="337.70" width="26.60" height="23.10" fill="none" stroke="#B8B8B8" stroke-width="1"/><rect x="727.35" y="338.85" width="24.30" height="20.80" fill="none" stroke="#A8A8A8" stroke-width="1.2" stroke-dasharray="1.2,6.8"/><rect x="842" y="270.7" width="48.50" height="31.30" fill="url(#hatch)"/><rect x="839.30" y="268.00" width="53.90" height="36.70" fill="none" stroke="#B8B8B8" stroke-width="1"/><rect x="840.65" y="269.35" width="51.20" height="34.00" fill="none" stroke="#A8A8A8" stroke-width="1.2" stroke-dasharray="1.2,6.8"/><text x="866.25" y="285.85" font-size="9.5" fill="#D6D6D6" text-anchor="middle" style="font-family:Liberation Mono">2</text><text x="866.25" y="293.85" font-size="9.5" fill="#D6D6D6" text-anchor="middle" style="font-family:Liberation Mono">N$18</text><rect x="842" y="349" width="48.50" height="31.00" fill="url(#hatch)"/><rect x="839.30" y="346.30" width="53.90" height="36.40" fill="none" stroke="#B8B8B8" stroke-width="1"/><rect x="840.65" y="347.65" width="51.20" height="33.70" fill="none" stroke="#A8A8A8" stroke-width="1.2" stroke-dasharray="1.2,6.8"/><text x="866.25" y="364.00" font-size="9.5" fill="#D6D6D6" text-anchor="middle" style="font-family:Liberation Mono">1</text><text x="866.25" y="372.00" font-size="9.5" fill="#D6D6D6" text-anchor="middle" style="font-family:Liberation Mono">N$15</text><rect x="995" y="271" width="47.00" height="31.00" fill="url(#hatch)"/><rect x="992.30" y="268.30" width="52.40" height="36.40" fill="none" stroke="#B8B8B8" stroke-width="1"/><rect x="993.65" y="269.65" width="49.70" height="33.70" fill="none" stroke="#A8A8A8" stroke-width="1.2" stroke-dasharray="1.2,6.8"/><text x="1018.50" y="286.00" font-size="9.5" fill="#D6D6D6" text-anchor="middle" style="font-family:Liberation Mono">2</text><text x="1018.50" y="294.00" font-size="9.5" fill="#D6D6D6" text-anchor="middle" style="font-family:Liberation Mono">GND</text><rect x="995" y="349.3" width="47.00" height="30.70" fill="url(#hatch)"/><rect x="992.30" y="346.60" width="52.40" height="36.10" fill="none" stroke="#B8B8B8" stroke-width="1"/><rect x="993.65" y="347.95" width="49.70" height="33.40" fill="none" stroke="#A8A8A8" stroke-width="1.2" stroke-dasharray="1.2,6.8"/><text x="1018.50" y="364.15" font-size="9.5" fill="#D6D6D6" text-anchor="middle" style="font-family:Liberation Mono">1</text><text x="1018.50" y="372.15" font-size="9.5" fill="#D6D6D6" text-anchor="middle" style="font-family:Liberation Mono">N$18</text><rect x="1094.5" y="407.5" width="30.00" height="60.00" fill="url(#hatch)"/><rect x="1091.80" y="404.80" width="35.40" height="65.40" fill="none" stroke="#B8B8B8" stroke-width="1"/><rect x="1093.15" y="406.15" width="32.70" height="62.70" fill="none" stroke="#A8A8A8" stroke-width="1.2" stroke-dasharray="1.2,6.8"/><g transform="rotate(-90 1109.50 437.50)"><text x="1109.50" y="437.00" font-size="9.5" fill="#D6D6D6" text-anchor="middle" style="font-family:Liberation Mono">2</text><text x="1109.50" y="445.00" font-size="9.5" fill="#D6D6D6" text-anchor="middle" style="font-family:Liberation Mono">+5V</text></g><rect x="1155.0" y="407.5" width="30.00" height="60.00" fill="url(#hatch)"/><rect x="1152.30" y="404.80" width="35.40" height="65.40" fill="none" stroke="#B8B8B8" stroke-width="1"/><rect x="1153.65" y="406.15" width="32.70" height="62.70" fill="none" stroke="#A8A8A8" stroke-width="1.2" stroke-dasharray="1.2,6.8"/><g transform="rotate(-90 1170.00 437.50)"><text x="1170.00" y="437.00" font-size="9.5" fill="#D6D6D6" text-anchor="middle" style="font-family:Liberation Mono">4</text><text x="1170.00" y="445.00" font-size="9.5" fill="#D6D6D6" text-anchor="middle" style="font-family:Liberation Mono">N$2</text></g><rect x="1215.5" y="407.5" width="30.00" height="60.00" fill="url(#hatch)"/><rect x="1212.80" y="404.80" width="35.40" height="65.40" fill="none" stroke="#B8B8B8" stroke-width="1"/><rect x="1214.15" y="406.15" width="32.70" height="62.70" fill="none" stroke="#A8A8A8" stroke-width="1.2" stroke-dasharray="1.2,6.8"/><g transform="rotate(-90 1230.50 437.50)"><text x="1230.50" y="437.00" font-size="9.5" fill="#D6D6D6" text-anchor="middle" style="font-family:Liberation Mono">6</text><text x="1230.50" y="445.00" font-size="9.5" fill="#D6D6D6" text-anchor="middle" style="font-family:Liberation Mono">GND</text></g><rect x="1094.5" y="537.6" width="30.00" height="61.40" fill="url(#hatch)"/><rect x="1091.80" y="534.90" width="35.40" height="66.80" fill="none" stroke="#B8B8B8" stroke-width="1"/><rect x="1093.15" y="536.25" width="32.70" height="64.10" fill="none" stroke="#A8A8A8" stroke-width="1.2" stroke-dasharray="1.2,6.8"/><g transform="rotate(-90 1109.50 568.30)"><text x="1109.50" y="567.80" font-size="9.5" fill="#D6D6D6" text-anchor="middle" style="font-family:Liberation Mono">1</text><text x="1109.50" y="575.80" font-size="9.5" fill="#D6D6D6" text-anchor="middle" style="font-family:Liberation Mono">MISO</text></g><rect x="1155.0" y="537.6" width="30.00" height="61.40" fill="url(#hatch)"/><rect x="1152.30" y="534.90" width="35.40" height="66.80" fill="none" stroke="#B8B8B8" stroke-width="1"/><rect x="1153.65" y="536.25" width="32.70" height="64.10" fill="none" stroke="#A8A8A8" stroke-width="1.2" stroke-dasharray="1.2,6.8"/><g transform="rotate(-90 1170.00 568.30)"><text x="1170.00" y="567.80" font-size="9.5" fill="#D6D6D6" text-anchor="middle" style="font-family:Liberation Mono">3</text><text x="1170.00" y="575.80" font-size="9.5" fill="#D6D6D6" text-anchor="middle" style="font-family:Liberation Mono">N$4</text></g><rect x="1215.5" y="537.6" width="30.00" height="61.40" fill="url(#hatch)"/><rect x="1212.80" y="534.90" width="35.40" height="66.80" fill="none" stroke="#B8B8B8" stroke-width="1"/><rect x="1214.15" y="536.25" width="32.70" height="64.10" fill="none" stroke="#A8A8A8" stroke-width="1.2" stroke-dasharray="1.2,6.8"/><g transform="rotate(-90 1230.50 568.30)"><text x="1230.50" y="567.80" font-size="9.5" fill="#D6D6D6" text-anchor="middle" style="font-family:Liberation Mono">5</text><text x="1230.50" y="575.80" font-size="9.5" fill="#D6D6D6" text-anchor="middle" style="font-family:Liberation Mono">N$5</text></g><rect x="807.5" y="499.75" width="53.70" height="15.50" fill="url(#hatch)"/><rect x="805.50" y="497.75" width="57.70" height="19.50" fill="none" stroke="#B8B8B8" stroke-width="1"/><rect x="806.50" y="498.75" width="55.70" height="17.50" fill="none" stroke="#A8A8A8" stroke-width="1.2" stroke-dasharray="1.2,6.8"/><rect x="932.5" y="499.75" width="54.00" height="15.50" fill="url(#hatch)"/><rect x="930.50" y="497.75" width="58.00" height="19.50" fill="none" stroke="#B8B8B8" stroke-width="1"/><rect x="931.50" y="498.75" width="56.00" height="17.50" fill="none" stroke="#A8A8A8" stroke-width="1.2" stroke-dasharray="1.2,6.8"/><rect x="807.5" y="530.0" width="53.70" height="15.50" fill="url(#hatch)"/><rect x="805.50" y="528.00" width="57.70" height="19.50" fill="none" stroke="#B8B8B8" stroke-width="1"/><rect x="806.50" y="529.00" width="55.70" height="17.50" fill="none" stroke="#A8A8A8" stroke-width="1.2" stroke-dasharray="1.2,6.8"/><rect x="932.5" y="530.0" width="54.00" height="15.50" fill="url(#hatch)"/><rect x="930.50" y="528.00" width="58.00" height="19.50" fill="none" stroke="#B8B8B8" stroke-width="1"/><rect x="931.50" y="529.00" width="56.00" height="17.50" fill="none" stroke="#A8A8A8" stroke-width="1.2" stroke-dasharray="1.2,6.8"/><rect x="807.5" y="560.25" width="53.70" height="15.50" fill="url(#hatch)"/><rect x="805.50" y="558.25" width="57.70" height="19.50" fill="none" stroke="#B8B8B8" stroke-width="1"/><rect x="806.50" y="559.25" width="55.70" height="17.50" fill="none" stroke="#A8A8A8" stroke-width="1.2" stroke-dasharray="1.2,6.8"/><rect x="932.5" y="560.25" width="54.00" height="15.50" fill="url(#hatch)"/><rect x="930.50" y="558.25" width="58.00" height="19.50" fill="none" stroke="#B8B8B8" stroke-width="1"/><rect x="931.50" y="559.25" width="56.00" height="17.50" fill="none" stroke="#A8A8A8" stroke-width="1.2" stroke-dasharray="1.2,6.8"/><rect x="807.5" y="590.5" width="53.70" height="15.50" fill="url(#hatch)"/><rect x="805.50" y="588.50" width="57.70" height="19.50" fill="none" stroke="#B8B8B8" stroke-width="1"/><rect x="806.50" y="589.50" width="55.70" height="17.50" fill="none" stroke="#A8A8A8" stroke-width="1.2" stroke-dasharray="1.2,6.8"/><rect x="932.5" y="590.5" width="54.00" height="15.50" fill="url(#hatch)"/><rect x="930.50" y="588.50" width="58.00" height="19.50" fill="none" stroke="#B8B8B8" stroke-width="1"/><rect x="931.50" y="589.50" width="56.00" height="17.50" fill="none" stroke="#A8A8A8" stroke-width="1.2" stroke-dasharray="1.2,6.8"/><rect x="807.5" y="620.75" width="53.70" height="15.50" fill="url(#hatch)"/><rect x="805.50" y="618.75" width="57.70" height="19.50" fill="none" stroke="#B8B8B8" stroke-width="1"/><rect x="806.50" y="619.75" width="55.70" height="17.50" fill="none" stroke="#A8A8A8" stroke-width="1.2" stroke-dasharray="1.2,6.8"/><rect x="932.5" y="620.75" width="54.00" height="15.50" fill="url(#hatch)"/><rect x="930.50" y="618.75" width="58.00" height="19.50" fill="none" stroke="#B8B8B8" stroke-width="1"/><rect x="931.50" y="619.75" width="56.00" height="17.50" fill="none" stroke="#A8A8A8" stroke-width="1.2" stroke-dasharray="1.2,6.8"/><rect x="807.5" y="651.0" width="53.70" height="15.50" fill="url(#hatch)"/><rect x="805.50" y="649.00" width="57.70" height="19.50" fill="none" stroke="#B8B8B8" stroke-width="1"/><rect x="806.50" y="650.00" width="55.70" height="17.50" fill="none" stroke="#A8A8A8" stroke-width="1.2" stroke-dasharray="1.2,6.8"/><rect x="932.5" y="651.0" width="54.00" height="15.50" fill="url(#hatch)"/><rect x="930.50" y="649.00" width="58.00" height="19.50" fill="none" stroke="#B8B8B8" stroke-width="1"/><rect x="931.50" y="650.00" width="56.00" height="17.50" fill="none" stroke="#A8A8A8" stroke-width="1.2" stroke-dasharray="1.2,6.8"/><rect x="807.5" y="681.25" width="53.70" height="15.50" fill="url(#hatch)"/><rect x="805.50" y="679.25" width="57.70" height="19.50" fill="none" stroke="#B8B8B8" stroke-width="1"/><rect x="806.50" y="680.25" width="55.70" height="17.50" fill="none" stroke="#A8A8A8" stroke-width="1.2" stroke-dasharray="1.2,6.8"/><rect x="932.5" y="681.25" width="54.00" height="15.50" fill="url(#hatch)"/><rect x="930.50" y="679.25" width="58.00" height="19.50" fill="none" stroke="#B8B8B8" stroke-width="1"/><rect x="931.50" y="680.25" width="56.00" height="17.50" fill="none" stroke="#A8A8A8" stroke-width="1.2" stroke-dasharray="1.2,6.8"/><rect x="598.8" y="483.8" width="31.20" height="47.20" fill="url(#hatch)"/><rect x="596.10" y="481.10" width="36.60" height="52.60" fill="none" stroke="#B8B8B8" stroke-width="1"/><rect x="597.45" y="482.45" width="33.90" height="49.90" fill="none" stroke="#A8A8A8" stroke-width="1.2" stroke-dasharray="1.2,6.8"/><g transform="rotate(-90 614.40 507.40)"><text x="614.40" y="506.90" font-size="9.5" fill="#D6D6D6" text-anchor="middle" style="font-family:Liberation Mono">1</text><text x="614.40" y="514.90" font-size="9.5" fill="#D6D6D6" text-anchor="middle" style="font-family:Liberation Mono">N$8</text></g><rect x="677.5" y="483.8" width="31.30" height="47.20" fill="url(#hatch)"/><rect x="674.80" y="481.10" width="36.70" height="52.60" fill="none" stroke="#B8B8B8" stroke-width="1"/><rect x="676.15" y="482.45" width="34.00" height="49.90" fill="none" stroke="#A8A8A8" stroke-width="1.2" stroke-dasharray="1.2,6.8"/><g transform="rotate(-90 693.15 507.40)"><text x="693.15" y="506.90" font-size="9.5" fill="#D6D6D6" text-anchor="middle" style="font-family:Liberation Mono">2</text><text x="693.15" y="514.90" font-size="9.5" fill="#D6D6D6" text-anchor="middle" style="font-family:Liberation Mono">N$14</text></g><rect x="598.8" y="575" width="31.20" height="47.00" fill="url(#hatch)"/><rect x="596.10" y="572.30" width="36.60" height="52.40" fill="none" stroke="#B8B8B8" stroke-width="1"/><rect x="597.45" y="573.65" width="33.90" height="49.70" fill="none" stroke="#A8A8A8" stroke-width="1.2" stroke-dasharray="1.2,6.8"/><g transform="rotate(-90 614.40 598.50)"><text x="614.40" y="598.00" font-size="9.5" fill="#D6D6D6" text-anchor="middle" style="font-family:Liberation Mono">1</text><text x="614.40" y="606.00" font-size="9.5" fill="#D6D6D6" text-anchor="middle" style="font-family:Liberation Mono">N$11</text></g><rect x="677.5" y="575" width="31.30" height="47.00" fill="url(#hatch)"/><rect x="674.80" y="572.30" width="36.70" height="52.40" fill="none" stroke="#B8B8B8" stroke-width="1"/><rect x="676.15" y="573.65" width="34.00" height="49.70" fill="none" stroke="#A8A8A8" stroke-width="1.2" stroke-dasharray="1.2,6.8"/><g transform="rotate(-90 693.15 598.50)"><text x="693.15" y="598.00" font-size="9.5" fill="#D6D6D6" text-anchor="middle" style="font-family:Liberation Mono">2</text><text x="693.15" y="606.00" font-size="9.5" fill="#D6D6D6" text-anchor="middle" style="font-family:Liberation Mono">N$13</text></g><rect x="598.8" y="666.3" width="31.20" height="46.20" fill="url(#hatch)"/><rect x="596.10" y="663.60" width="36.60" height="51.60" fill="none" stroke="#B8B8B8" stroke-width="1"/><rect x="597.45" y="664.95" width="33.90" height="48.90" fill="none" stroke="#A8A8A8" stroke-width="1.2" stroke-dasharray="1.2,6.8"/><g transform="rotate(-90 614.40 689.40)"><text x="614.40" y="688.90" font-size="9.5" fill="#D6D6D6" text-anchor="middle" style="font-family:Liberation Mono">1</text><text x="614.40" y="696.90" font-size="9.5" fill="#D6D6D6" text-anchor="middle" style="font-family:Liberation Mono">N$9</text></g><rect x="677.5" y="666.3" width="31.30" height="46.20" fill="url(#hatch)"/><rect x="674.80" y="663.60" width="36.70" height="51.60" fill="none" stroke="#B8B8B8" stroke-width="1"/><rect x="676.15" y="664.95" width="34.00" height="48.90" fill="none" stroke="#A8A8A8" stroke-width="1.2" stroke-dasharray="1.2,6.8"/><g transform="rotate(-90 693.15 689.40)"><text x="693.15" y="688.90" font-size="9.5" fill="#D6D6D6" text-anchor="middle" style="font-family:Liberation Mono">2</text><text x="693.15" y="696.90" font-size="9.5" fill="#D6D6D6" text-anchor="middle" style="font-family:Liberation Mono">N$12</text></g><rect x="1023.7" y="787" width="32.60" height="47.00" fill="url(#hatch)"/><rect x="1021.00" y="784.30" width="38.00" height="52.40" fill="none" stroke="#B8B8B8" stroke-width="1"/><rect x="1022.35" y="785.65" width="35.30" height="49.70" fill="none" stroke="#A8A8A8" stroke-width="1.2" stroke-dasharray="1.2,6.8"/><g transform="rotate(-90 1040.00 810.50)"><text x="1040.00" y="810.00" font-size="9.5" fill="#D6D6D6" text-anchor="middle" style="font-family:Liberation Mono">1</text><text x="1040.00" y="818.00" font-size="9.5" fill="#D6D6D6" text-anchor="middle" style="font-family:Liberation Mono">N$10</text></g><rect x="1102.2" y="787" width="32.00" height="47.00" fill="url(#hatch)"/><rect x="1099.50" y="784.30" width="37.40" height="52.40" fill="none" stroke="#B8B8B8" stroke-width="1"/><rect x="1100.85" y="785.65" width="34.70" height="49.70" fill="none" stroke="#A8A8A8" stroke-width="1.2" stroke-dasharray="1.2,6.8"/><g transform="rotate(-90 1118.20 810.50)"><text x="1118.20" y="810.00" font-size="9.5" fill="#D6D6D6" text-anchor="middle" style="font-family:Liberation Mono">2</text><text x="1118.20" y="818.00" font-size="9.5" fill="#D6D6D6" text-anchor="middle" style="font-family:Liberation Mono">N$3</text></g><rect x="1023.7" y="878.5" width="32.60" height="46.50" fill="url(#hatch)"/><rect x="1021.00" y="875.80" width="38.00" height="51.90" fill="none" stroke="#B8B8B8" stroke-width="1"/><rect x="1022.35" y="877.15" width="35.30" height="49.20" fill="none" stroke="#A8A8A8" stroke-width="1.2" stroke-dasharray="1.2,6.8"/><g transform="rotate(-90 1040.00 901.75)"><text x="1040.00" y="901.25" font-size="9.5" fill="#D6D6D6" text-anchor="middle" style="font-family:Liberation Mono">2</text><text x="1040.00" y="909.25" font-size="9.5" fill="#D6D6D6" text-anchor="middle" style="font-family:Liberation Mono">N$6</text></g><rect x="1102.2" y="878.5" width="32.00" height="46.50" fill="url(#hatch)"/><rect x="1099.50" y="875.80" width="37.40" height="51.90" fill="none" stroke="#B8B8B8" stroke-width="1"/><rect x="1100.85" y="877.15" width="34.70" height="49.20" fill="none" stroke="#A8A8A8" stroke-width="1.2" stroke-dasharray="1.2,6.8"/><g transform="rotate(-90 1118.20 901.75)"><text x="1118.20" y="901.25" font-size="9.5" fill="#D6D6D6" text-anchor="middle" style="font-family:Liberation Mono">1</text><text x="1118.20" y="909.25" font-size="9.5" fill="#D6D6D6" text-anchor="middle" style="font-family:Liberation Mono">N$3</text></g><rect x="774" y="836" width="19.00" height="23.00" fill="url(#hatch)"/><rect x="771.70" y="833.70" width="23.60" height="27.60" fill="none" stroke="#B8B8B8" stroke-width="1"/><rect x="772.85" y="834.85" width="21.30" height="25.30" fill="none" stroke="#A8A8A8" stroke-width="1.2" stroke-dasharray="1.2,6.8"/><rect x="820" y="836" width="19.00" height="23.00" fill="url(#hatch)"/><rect x="817.70" y="833.70" width="23.60" height="27.60" fill="none" stroke="#B8B8B8" stroke-width="1"/><rect x="818.85" y="834.85" width="21.30" height="25.30" fill="none" stroke="#A8A8A8" stroke-width="1.2" stroke-dasharray="1.2,6.8"/><rect x="797" y="884" width="19.00" height="23.00" fill="url(#hatch)"/><rect x="794.70" y="881.70" width="23.60" height="27.60" fill="none" stroke="#B8B8B8" stroke-width="1"/><rect x="795.85" y="882.85" width="21.30" height="25.30" fill="none" stroke="#A8A8A8" stroke-width="1.2" stroke-dasharray="1.2,6.8"/><rect x="467" y="514" width="27" height="37" fill="#A00C0C"/><rect x="511" y="514" width="27" height="37" fill="#A00C0C"/><rect x="467" y="586" width="27" height="37" fill="#A00C0C"/><rect x="511" y="586" width="27" height="37" fill="#A00C0C"/><rect x="467" y="527" width="27" height="24" fill="#C42A2E"/><rect x="511" y="527" width="27" height="24" fill="#C42A2E"/><rect x="467" y="586" width="27" height="24" fill="#C42A2E"/><rect x="511" y="586" width="27" height="24" fill="#C42A2E"/><rect x="474" y="524" width="20" height="27" fill="url(#hatch)" opacity="0.5"/><rect x="511" y="524" width="20" height="27" fill="url(#hatch)" opacity="0.5"/><rect x="472" y="586" width="20" height="27" fill="url(#hatch)" opacity="0.5"/><rect x="511" y="586" width="20" height="27" fill="url(#hatch)" opacity="0.5"/><g transform="rotate(-90 484.7 536.7)"><text x="484.7" y="535.7" font-size="8" fill="#D6D6D6" text-anchor="middle" style="font-family:Liberation Mono">D18</text><text x="484.7" y="542.7" font-size="8" fill="#D6D6D6" text-anchor="middle" style="font-family:Liberation Mono">N$18</text></g><ellipse cx="484.7" cy="530.7" rx="6.5" ry="4.5" stroke="#FF3A10" stroke-width="1.2" fill="none" transform="rotate(-40 484.7 530.7)"/><g transform="rotate(-90 524.5 536.7)"><text x="524.5" y="535.7" font-size="8" fill="#D6D6D6" text-anchor="middle" style="font-family:Liberation Mono">R</text><text x="524.5" y="542.7" font-size="8" fill="#D6D6D6" text-anchor="middle" style="font-family:Liberation Mono">N$3</text></g><ellipse cx="524.5" cy="530.7" rx="6.5" ry="4.5" stroke="#FF3A10" stroke-width="1.2" fill="none" transform="rotate(-40 524.5 530.7)"/><g transform="rotate(-90 483.3 608)"><text x="483.3" y="607" font-size="8" fill="#D6D6D6" text-anchor="middle" style="font-family:Liberation Mono">B</text><text x="483.3" y="614" font-size="8" fill="#D6D6D6" text-anchor="middle" style="font-family:Liberation Mono">N$11</text></g><ellipse cx="483.3" cy="602" rx="6.5" ry="4.5" stroke="#FF3A10" stroke-width="1.2" fill="none" transform="rotate(-40 483.3 602)"/><g transform="rotate(-90 525.5 603.7)"><text x="525.5" y="602.7" font-size="8" fill="#D6D6D6" text-anchor="middle" style="font-family:Liberation Mono">G</text><text x="525.5" y="609.7" font-size="8" fill="#D6D6D6" text-anchor="middle" style="font-family:Liberation Mono">N$6</text></g><ellipse cx="525.5" cy="597.7" rx="6.5" ry="4.5" stroke="#FF3A10" stroke-width="1.2" fill="none" transform="rotate(-40 525.5 597.7)"/><rect x="828" y="499.75" width="33.2" height="15.5" fill="#C8343A" opacity="0.55"/><rect x="932.5" y="499.75" width="33" height="15.5" fill="#C8343A" opacity="0.55"/><rect x="828" y="530.00" width="33.2" height="15.5" fill="#C8343A" opacity="0.55"/><rect x="932.5" y="530.00" width="33" height="15.5" fill="#C8343A" opacity="0.55"/><rect x="828" y="560.25" width="33.2" height="15.5" fill="#C8343A" opacity="0.55"/><rect x="932.5" y="560.25" width="33" height="15.5" fill="#C8343A" opacity="0.55"/><rect x="828" y="590.50" width="33.2" height="15.5" fill="#C8343A" opacity="0.55"/><rect x="932.5" y="590.50" width="33" height="15.5" fill="#C8343A" opacity="0.55"/><rect x="828" y="620.75" width="33.2" height="15.5" fill="#C8343A" opacity="0.55"/><rect x="932.5" y="620.75" width="33" height="15.5" fill="#C8343A" opacity="0.55"/><rect x="828" y="651.00" width="33.2" height="15.5" fill="#C8343A" opacity="0.55"/><rect x="932.5" y="651.00" width="33" height="15.5" fill="#C8343A" opacity="0.55"/><rect x="828" y="681.25" width="33.2" height="15.5" fill="#C8343A" opacity="0.55"/><rect x="932.5" y="681.25" width="33" height="15.5" fill="#C8343A" opacity="0.55"/><ellipse cx="740" cy="303" rx="5" ry="3.5" stroke="#FF3010" stroke-width="1" fill="none" transform="rotate(-40 740 303)"/><ellipse cx="690" cy="326" rx="5" ry="3.5" stroke="#FF3010" stroke-width="1" fill="none" transform="rotate(-40 690 326)"/><ellipse cx="740" cy="349" rx="5" ry="3.5" stroke="#FF3010" stroke-width="1" fill="none" transform="rotate(-40 740 349)"/><ellipse cx="783.5" cy="846" rx="5" ry="3.5" stroke="#FF3010" stroke-width="1" fill="none" transform="rotate(-40 783.5 846)"/><ellipse cx="830" cy="847" rx="5" ry="3.5" stroke="#FF3010" stroke-width="1" fill="none" transform="rotate(-40 830 847)"/><ellipse cx="806" cy="895" rx="5" ry="3.5" stroke="#FF3010" stroke-width="1" fill="none" transform="rotate(-40 806 895)"/><g fill="#A9A9A9" opacity="0.3"><text font-size="42.01" transform="translate(410.57,295.40) scale(0.9898,1)">U$1</text><text font-size="40.86" transform="translate(380.14,325.00) scale(1.0012,1)">1</text><text font-size="40.29" transform="translate(410.67,445.30) scale(1.0344,1)">PINHD-2X2-SMD</text><text font-size="41.43" transform="translate(443.20,506.90) scale(1.0166,1)">A</text><text font-size="41.43" transform="translate(516.35,506.90) scale(1.0104,1)">R</text><text font-size="41.29" transform="translate(442.49,657.90) scale(1.0315,1)">B</text><text font-size="41.29" transform="translate(513.82,657.90) scale(1.0582,1)">G</text><text font-size="32.69" transform="translate(611.15,476.90) scale(1.0523,1)">R3</text><text font-size="34.55" transform="translate(611.26,567.60) scale(0.9895,1)">R4</text><text font-size="32.11" transform="translate(617.40,652.40) scale(0.9303,1)">499</text><text font-size="32.54" transform="translate(611.35,658.90) scale(1.0172,1)">R5</text><text font-size="33.12" transform="translate(611.57,744.00) scale(1.0065,1)">1K</text><text font-size="41.43" transform="translate(847.16,489.80) scale(1.0028,1)">IC1</text><text font-size="41.43" transform="translate(772.16,791.90) scale(1.0093,1)">T1</text><text font-size="32.26" transform="translate(1036.02,779.70) scale(1.0580,1)">R2</text><text font-size="32.69" transform="translate(1076.28,955.80) scale(1.0401,1)">R1</text><text font-size="40.86" transform="translate(268.26,809.75) scale(1.0218,1)">PINHD-2X2-SMD</text><text font-size="40.86" transform="translate(516.68,961.30) scale(1.0147,1)">U$2</text><text font-size="41.29" transform="translate(600.14,930.80) scale(0.9908,1)">1</text><text font-size="33.84" transform="translate(410.30,781.19) rotate(-90) scale(1.2538,1)">LEDRGBNEW</text><text font-size="41.29" transform="translate(908.90,829.60) rotate(-90) scale(1.0157,1)">ATTINY44-SSU</text><text font-size="42.15" transform="translate(1078.30,597.44) rotate(-90) scale(0.8818,1)">JP1</text><text font-size="41.72" transform="translate(1108.00,627.14) rotate(-90) scale(0.9370,1)">1</text><text font-size="33.69" transform="translate(987.40,366.69) rotate(-90) scale(1.0061,1)">C1</text><text font-size="40.43" transform="translate(622.40,560.28) rotate(-90) scale(1.0141,1)">D</text><text font-size="43.01" transform="translate(823.30,314.98) rotate(-90) scale(0.9679,1)">2</text><text font-size="32.26" transform="translate(835.00,366.29) rotate(-90) scale(0.9852,1)">R</text><path d="M795.5,316V340M797,327.5H833" stroke="#A9A9A9" stroke-width="2.8"/><ellipse cx="823" cy="332.5" rx="9.5" ry="6.5" fill="none" stroke="#A9A9A9" stroke-width="2.8"/></g><path d="M381.5,378V858" stroke="#FF2A00" stroke-width="8" stroke-linecap="round"/><path d="M320.5,179 V962.5 H1900" stroke="#B8963A" stroke-width="1" fill="none"/><path d="M398.5,295H424.5M411.5,282V308" stroke="#A0A0A0" stroke-width="1" fill="none"/><path d="M398.5,446H424.5M411.5,433V459" stroke="#A0A0A0" stroke-width="1" fill="none"/><path d="M368,507.4H394M381,494.4V520.4" stroke="#A0A0A0" stroke-width="1" fill="none"/><path d="M580,507.4H606M593,494.4V520.4" stroke="#A0A0A0" stroke-width="1" fill="none"/><path d="M598.3,477.3H624.3M611.3,464.3V490.3" stroke="#A0A0A0" stroke-width="1" fill="none"/><path d="M598.5,565H624.5M611.5,552V578" stroke="#A0A0A0" stroke-width="1" fill="none"/><path d="M598.5,656H624.5M611.5,643V669" stroke="#A0A0A0" stroke-width="1" fill="none"/><path d="M598.5,744.5H624.5M611.5,731.5V757.5" stroke="#A0A0A0" stroke-width="1" fill="none"/><path d="M580.5,780.5H606.5M593.5,767.5V793.5" stroke="#A0A0A0" stroke-width="1" fill="none"/><path d="M580.3,932.5H606.3M593.3,919.5V945.5" stroke="#A0A0A0" stroke-width="1" fill="none"/><path d="M780.5,292H806.5M793.5,279V305" stroke="#A0A0A0" stroke-width="1" fill="none"/><path d="M823,368H849M836,355V381" stroke="#A0A0A0" stroke-width="1" fill="none"/><path d="M835.3,490.5H861.3M848.3,477.5V503.5" stroke="#A0A0A0" stroke-width="1" fill="none"/><path d="M1023.5,780.5H1049.5M1036.5,767.5V793.5" stroke="#A0A0A0" stroke-width="1" fill="none"/><path d="M1108.4,932.6H1134.4M1121.4,919.6V945.6" stroke="#A0A0A0" stroke-width="1" fill="none"/><path d="M759.4,792.4H785.4M772.4,779.4V805.4" stroke="#A0A0A0" stroke-width="1" fill="none"/><path d="M867.4,537.5H893.4M880.4,524.5V550.5" stroke="#A0A0A0" stroke-width="1" fill="none"/><path d="M1065.3,598.3H1091.3M1078.3,585.3V611.3" stroke="#A0A0A0" stroke-width="1" fill="none"/><path d="M974,369H1000M987,356V382" stroke="#A0A0A0" stroke-width="1" fill="none"/><path d="M481.5,355.4H523.5M502.5,334.4V376.4" stroke="#9AAE22" stroke-width="1" fill="none"/><path d="M706.3,325.3H722.3M714.3,317.3V333.3" stroke="#9AAE22" stroke-width="1" fill="none"/><path d="M857.2,325.3H876.2M866.7,315.8V334.8" stroke="#9AAE22" stroke-width="1" fill="none"/><path d="M1008.2,325H1027.8M1018,315.2V334.8" stroke="#9AAE22" stroke-width="1" fill="none"/><path d="M1148.3,507.5H1192.3M1170.3,485.5V529.5" stroke="#9AAE22" stroke-width="1" fill="none"/><path d="M478.6,568.4H526.6M502.6,544.4V592.4" stroke="#9AAE22" stroke-width="1" fill="none"/><path d="M643.2,507.4H666.0M654.6,496.0V518.8" stroke="#9AAE22" stroke-width="1" fill="none"/><path d="M643.2,597.7H666.0M654.6,586.3000000000001V609.1" stroke="#9AAE22" stroke-width="1" fill="none"/><path d="M643.2,688H666.0M654.6,676.6V699.4" stroke="#9AAE22" stroke-width="1" fill="none"/><path d="M877.4,598.6H915.4M896.4,579.6V617.6" stroke="#9AAE22" stroke-width="1" fill="none"/><path d="M796.6,872H815.4M806,862.6V881.4" stroke="#9AAE22" stroke-width="1" fill="none"/><path d="M1068.5,810H1088.5M1078.5,800V820" stroke="#9AAE22" stroke-width="1" fill="none"/><path d="M1068.5,901H1088.5M1078.5,891V911" stroke="#9AAE22" stroke-width="1" fill="none"/><path d="M481.3,871.2H523.3M502.3,850.2V892.2" stroke="#9AAE22" stroke-width="1" fill="none"/><rect x="1869" y="188" width="27" height="145" fill="#424242"/><rect x="1874.5" y="196" width="16" height="16" rx="2" fill="#2A9A48"/><rect x="1878.5" y="200.5" width="8" height="7" fill="none" stroke="#E8D84A" stroke-width="1.3"/><text x="1878.0" y="219.4" font-size="11.5" fill="#E6E6E6" transform="rotate(90 1878 219.4)" textLength="100.6" lengthAdjust="spacingAndGlyphs" style="font-family:Liberation Mono;font-weight:bold">MANUFACTURING</text><rect x="1869" y="349" width="27" height="146" fill="#424242"/><rect x="1874.5" y="368" width="16" height="16" rx="2" fill="#F2A71E"/><path d="M1879,380v-8h7v2.5h-4v1.5h3v2h-3v2z" fill="#5A4A30"/><text x="1878.0" y="395.0" font-size="11.5" fill="#E6E6E6" transform="rotate(90 1878 395)" textLength="69.4" lengthAdjust="spacingAndGlyphs" style="font-family:Liberation Mono;font-weight:bold">FUSION 360</text><rect x="1869" y="510" width="27" height="145.5" fill="#424242"/><rect x="1874.5" y="529" width="16" height="16" rx="2" fill="#F2A71E"/><path d="M1879,541v-8h7v2.5h-4v1.5h3v2h-3v2z" fill="#5A4A30"/><text x="1878.0" y="556.6" font-size="11.5" fill="#E6E6E6" transform="rotate(90 1878 556.6)" textLength="76.2" lengthAdjust="spacingAndGlyphs" style="font-family:Liberation Mono;font-weight:bold">FUSION TEAM</text></g><rect x="1899" y="179" width="21" height="806" fill="#F0F0F0"/><path d="M1905,193l5,-5l5,5" stroke="#444" stroke-width="1.3" fill="none"/><path d="M1905,969l5,5l5,-5" stroke="#444" stroke-width="1.3" fill="none"/><rect x="1900" y="645" width="19" height="306" fill="#A6A6A6"/><rect x="70" y="984" width="1850" height="21" fill="#EEEEEE"/><rect x="92" y="985" width="1215" height="19" fill="#CDCDCD"/><path d="M83,990l-5,4l5,4" stroke="#444" stroke-width="1.4" fill="none"/><path d="M1886,990l5,4l-5,4" stroke="#444" stroke-width="1.4" fill="none"/><rect x="0" y="1005" width="1920" height="25" fill="#EEEEEE"/><rect x="0" y="1005" width="1920" height="1" fill="#C8C8C8"/><rect x="0" y="1029" width="1920" height="1" fill="#D0D0D0"/><text x="6" y="1023" font-size="13" fill="#333" textLength="399" lengthAdjust="spacingAndGlyphs">Select 'Signal: +5V, Class: 0 default'? (left=yes, right=next, ESC=cancel)</text><path d="M1841.5,1008V1027M1868.5,1008V1027M1895.5,1008V1027" stroke="#D6D6D6" stroke-width="1"/><path d="M1862,1008l-13,12h7l-4,8l13,-12h-7z" fill="#2DB34A"/><path d="M1900,1010h6v8l6,6" stroke="#1E88E5" stroke-width="1.6" fill="none"/><circle cx="1900" cy="1010" r="2.2" fill="#1DA84A"/><circle cx="1913" cy="1024" r="2.2" fill="#1DA84A"/><path d="M1898,1025l5,-3l-1.5,2.5l4,-1.5l-5.5,5l1.5,-3z" fill="#555"/><defs><linearGradient id="tb" x1="0" x2="1" y1="0" y2="0"><stop offset="0" stop-color="#2A2628"/><stop offset="0.5" stop-color="#29231F"/><stop offset="1" stop-color="#2A1C15"/></linearGradient></defs><rect x="0" y="1030" width="1920" height="50" fill="url(#tb)"/><rect x="0" y="1030" width="60" height="50" fill="#2A1E18"/><path d="M20,1047l9,-1.3v9h-9zM30.5,1045.5l10,-1.5v11h-10zM20,1056.5h9v9l-9,-1.3zM30.5,1056.5h10v11l-10,-1.5z" fill="#FFF"/><rect x="60" y="1030" width="430" height="50" fill="#F0F0F0"/><circle cx="84.5" cy="1055" r="11" fill="none" stroke="#151515" stroke-width="3"/><text x="110" y="1062" font-size="18" fill="#2A2A2A" textLength="152" lengthAdjust="spacingAndGlyphs">Type here to search</text><rect x="460" y="1045" width="8" height="13" rx="4" fill="none" stroke="#333" stroke-width="1.5"/><path d="M457,1054a7,7 0 0 0 14,0M464,1061v4M460,1065h8" stroke="#333" stroke-width="1.4" fill="none"/><path d="M510,1046h16M510,1063h16M511,1049v11h14v-11z" stroke="#FFF" stroke-width="1.3" fill="none"/><path d="M530,1045v3M530,1050v9M530,1061v3" stroke="#FFF" stroke-width="1.3"/><path d="M570,1044h9l2,2h16v19h-27z" fill="#F0C040"/><rect x="570" y="1049" width="27" height="16" fill="#F7D66A"/><path d="M576,1066v-8h15v8h-4v-4h-7v4z" fill="#3FA8E8"/><rect x="559" y="1077" width="51" height="3" fill="#76B9ED"/><path d="M653,1042l8,4v18l-8,4l-13,-11l-4,3l-2,-1v-11l2,-1l4,3z M653,1049l-7,6l7,6z" fill="#1F7AD6" fill-rule="evenodd"/><circle cx="708" cy="1055" r="13.5" fill="#2A9FD8"/><path d="M700,1054l15,-6l-3,14l-4,-3l-2,3v-4l5,-5l-7,4z" fill="#FFF"/><rect x="759" y="1044" width="22" height="22" fill="#F8DA00"/><path d="M770,1066l11,-11v11z" fill="#1E1E1E"/><path d="M773,1066l8,-8v8z" fill="#F8DA00"/><path d="M823,1047l14,-2l5,19l-15,3z" fill="#9CCFE6" stroke="#5A8AA0" stroke-width="1"/><path d="M826,1046l13,-2" stroke="#888" stroke-width="2"/><circle cx="894" cy="1055" r="13.5" fill="#DB4437"/><path d="M894,1055L894,1068.5A13.5,13.5 0 0 1 882.3,1048.25Z" fill="#0F9D58"/><path d="M894,1055L905.7,1048.25A13.5,13.5 0 0 1 894,1068.5Z" fill="#F4C20D"/><circle cx="894" cy="1055" r="6.2" fill="#FFF"/><circle cx="894" cy="1055" r="4.8" fill="#4285F4"/><rect x="868" y="1077" width="52" height="3" fill="#76B9ED"/><circle cx="956" cy="1055" r="12" fill="#00979C"/><path d="M947.5,1055a3.5,3.5 0 1 0 7,0a3.5,3.5 0 1 0 -7,0M957.5,1055a3.5,3.5 0 1 0 7,0a3.5,3.5 0 1 0 -7,0" stroke="#FFF" stroke-width="1.6" fill="none"/><rect x="931" y="1077" width="50" height="3" fill="#76B9ED"/><rect x="989" y="1030" width="55" height="50" fill="#4A433E"/><rect x="1044" y="1030" width="4" height="50" fill="#3A3430"/><path d="M1008,1042h14l-3,5h-6l-1,5h6l-2,4h-5l-1,5h8l-3,6h-11z" fill="#E08A28"/><rect x="989" y="1077" width="59" height="3" fill="#76B9ED"/><rect x="1407" y="1043" width="60" height="23" fill="#000" stroke="#FFF" stroke-width="2.2"/><rect x="1409" y="1045" width="34" height="19" fill="#1EA446"/><rect x="1468" y="1049" width="3" height="11" fill="#FFF"/><text x="1417" y="1062" font-size="19" fill="#FFF" textLength="38" lengthAdjust="spacingAndGlyphs">62%</text><circle cx="1524" cy="1051" r="3.2" fill="none" stroke="#EEE" stroke-width="1.3"/><circle cx="1532" cy="1046" r="3.2" fill="none" stroke="#EEE" stroke-width="1.3"/><path d="M1518,1063a6,6 0 0 1 11,-4M1527,1057a6,6 0 0 1 10,-2" stroke="#EEE" stroke-width="1.3" fill="none"/><path d="M1563,1061l9,-9l9,9" stroke="#EEE" stroke-width="1.5" fill="none"/><rect x="1593" y="1049" width="17" height="10" fill="none" stroke="#EEE" stroke-width="1.3"/><rect x="1595" y="1051" width="9" height="6" fill="#EEE"/><rect x="1610" y="1052" width="2" height="4" fill="#EEE"/><path d="M1626,1062a13,13 0 0 1 13,-13M1629,1062a10,10 0 0 1 10,-10M1632,1062a7,7 0 0 1 7,-7" stroke="#EEE" stroke-width="1.2" fill="none"/><circle cx="1638" cy="1062" r="1.5" fill="#EEE"/><path d="M1653,1051h4l5,-5v18l-5,-5h-4z" fill="none" stroke="#EEE" stroke-width="1.3"/><path d="M1665,1051a5,5 0 0 1 0,8M1668,1048a9,9 0 0 1 0,14" stroke="#EEE" stroke-width="1.3" fill="none"/><path d="M1688,1064l6,-15a3,3 0 0 1 5,2l-6,14M1700,1054q6,-2 5,3" stroke="#EEE" stroke-width="1.3" fill="none"/><text x="1725" y="1061" font-size="15" fill="#EEE" textLength="29" lengthAdjust="spacingAndGlyphs">ENG</text><text x="1790" y="1050" font-size="15" fill="#EEE" textLength="35" lengthAdjust="spacingAndGlyphs">15:43</text><text x="1771" y="1072" font-size="15" fill="#EEE" textLength="75" lengthAdjust="spacingAndGlyphs">10-04-2019</text><path d="M1869.5,1045.5h19v14h-9l-3,3v-3h-7z" fill="none" stroke="#EEE" stroke-width="1.3"/><rect x="1913" y="1030" width="1" height="50" fill="#5A4A40"/></svg>
</body></html>
